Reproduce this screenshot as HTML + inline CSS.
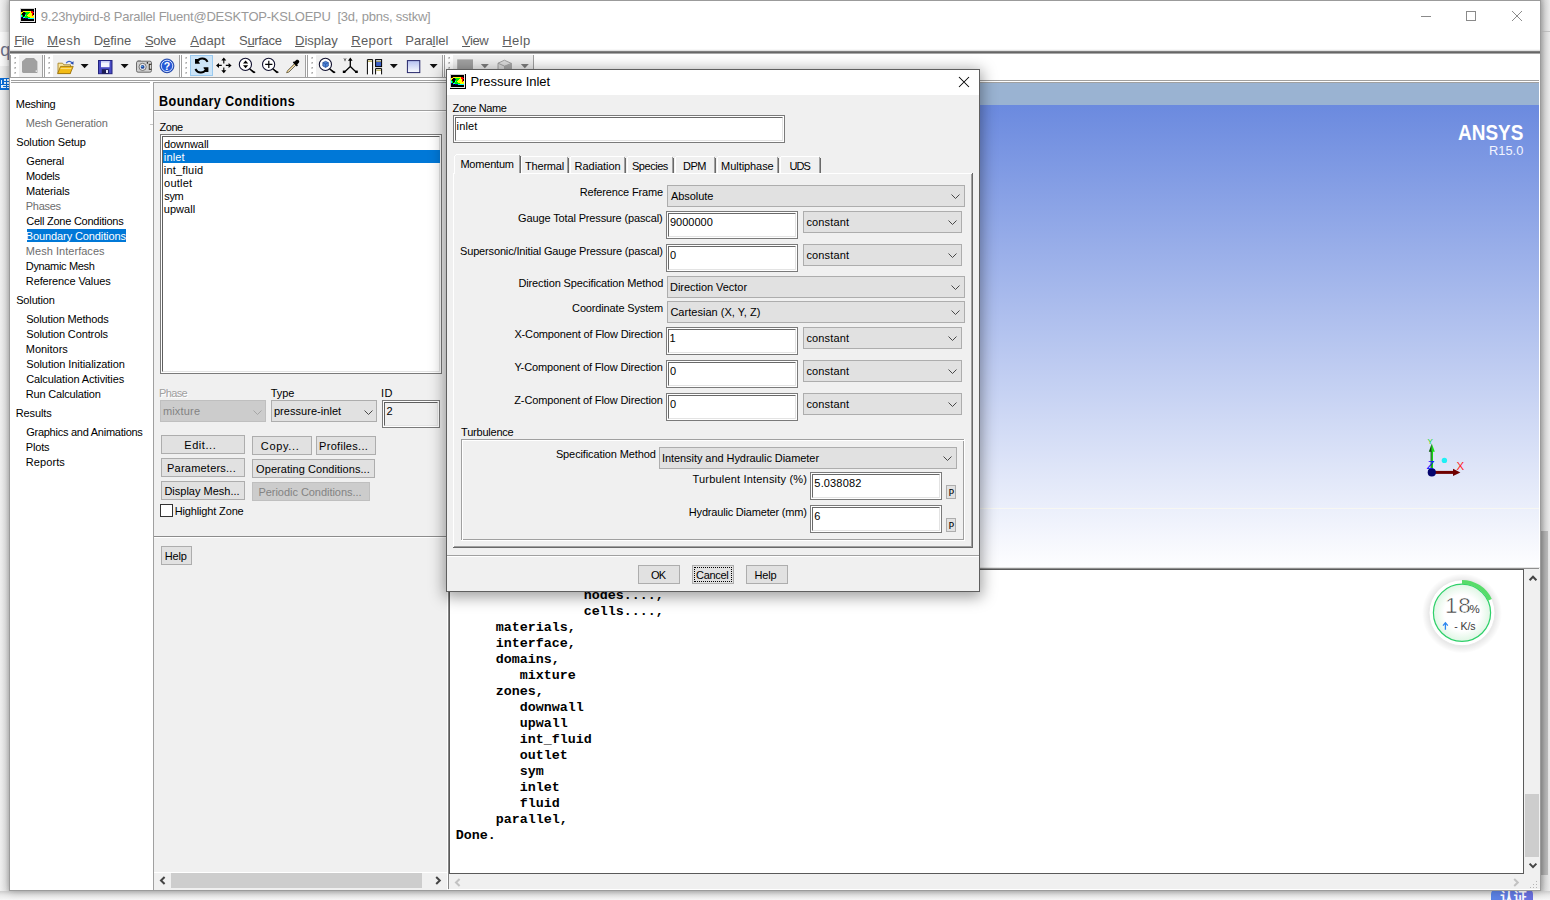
<!DOCTYPE html>
<html lang="en"><head><meta charset="utf-8"><title>Fluent - Pressure Inlet</title>
<style>
html,body{margin:0;padding:0;}
body{width:1550px;height:900px;overflow:hidden;position:relative;background:#f0f0f0;font-family:"Liberation Sans",sans-serif;font-size:11px;}
div,span.t,svg{position:absolute;box-sizing:border-box;}
span.t{white-space:pre;}
svg{overflow:visible;}
u{text-decoration:underline;text-underline-offset:1px;}
</style></head>
<body>
<div style="left:0px;top:0px;width:9px;height:900px;background:linear-gradient(90deg,#f0f0f0 0,#e6e6e6 60%,#d2d2d2 100%);"></div>
<div style="left:0px;top:32px;width:9px;height:34px;background:linear-gradient(90deg,#fbfbfb 0,#f4f4f4 70%,#dedede 100%);"></div>
<span id="t1" class="t" style="top:41.16px;font-size:18px;line-height:18px;color:#6b6e86;left:0.20px;">q</span>
<div style="left:0px;top:78px;width:9px;height:12px;background:#0a6cd6;"></div>
<svg style="left:0px;top:78px;shape-rendering:crispEdges;" width="9" height="12" viewBox="0 0 9 12"><g fill="#e8f4ff"><rect x="1" y="2" width="1" height="4"/><rect x="4" y="1" width="2" height="2"/><rect x="7" y="1" width="2" height="2"/><rect x="4" y="4" width="2" height="2"/><rect x="7" y="4" width="2" height="2"/><rect x="1" y="7" width="2" height="3"/><rect x="3" y="7" width="3" height="1"/><rect x="7" y="7" width="2" height="1"/><rect x="3" y="9" width="3" height="1"/><rect x="7" y="9" width="2" height="1"/></g></svg>
<div style="left:1541px;top:0px;width:9px;height:900px;background:linear-gradient(90deg,#c2c2c2 0,#dcdcdc 45%,#ececec 100%);"></div>
<div style="left:1541px;top:31px;width:9px;height:1px;background:#c4c4c4;"></div>
<div style="left:1541px;top:531px;width:7px;height:344px;background:linear-gradient(90deg,#9c9c9c 0,#b4b4b4 60%,#bcbcbc 100%);"></div>
<div style="left:0px;top:891px;width:1550px;height:9px;background:linear-gradient(180deg,#cfcfcf 0,#e9e9e9 45%,#f7f7f7 100%);"></div>
<div style="left:1491px;top:889px;width:42px;height:16px;background:linear-gradient(90deg,#5a85e6,#6a6fe0);border-radius:5px 5px 0 0;"></div>
<span id="t2" class="t" style="top:891.07px;font-size:13.5px;line-height:13.5px;color:#fff;font-family:'Liberation Sans', 'Noto Sans CJK SC', sans-serif;font-weight:bold;left:1500.00px;">认证</span>
<div style="left:9px;top:0px;width:1532px;height:891px;background:#ffffff;border:1px solid #9b9b9b;box-shadow:0 0 9px rgba(0,0,0,.28);"></div>
<span id="t3" class="t" style="top:10.00px;font-size:13px;line-height:13px;color:#999999;letter-spacing:-0.224px;left:40.74px;">9.23hybird-8 Parallel Fluent@DESKTOP-KSLOEPU  [3d, pbns, sstkw]</span>
<svg style="left:20px;top:8px;shape-rendering:crispEdges;" width="16" height="15" viewBox="0 0 16 15"><rect x="0" y="0" width="15" height="1" fill="#d4d4d4"/><rect x="15" y="0" width="1" height="1" fill="#000000"/><rect x="0" y="1" width="1" height="1" fill="#d4d4d4"/><rect x="1" y="1" width="13" height="1" fill="#000000"/><rect x="14" y="1" width="1" height="1" fill="#e8e8e8"/><rect x="15" y="1" width="1" height="1" fill="#000000"/><rect x="0" y="2" width="1" height="1" fill="#d4d4d4"/><rect x="1" y="2" width="13" height="1" fill="#000000"/><rect x="14" y="2" width="1" height="1" fill="#e8e8e8"/><rect x="15" y="2" width="1" height="1" fill="#000000"/><rect x="0" y="3" width="1" height="1" fill="#d4d4d4"/><rect x="1" y="3" width="1" height="1" fill="#000000"/><rect x="2" y="3" width="1" height="1" fill="#700000"/><rect x="3" y="3" width="8" height="1" fill="#ffff00"/><rect x="11" y="3" width="2" height="1" fill="#ff0000"/><rect x="13" y="3" width="1" height="1" fill="#000000"/><rect x="14" y="3" width="1" height="1" fill="#e8e8e8"/><rect x="15" y="3" width="1" height="1" fill="#000000"/><rect x="0" y="4" width="1" height="1" fill="#d4d4d4"/><rect x="1" y="4" width="2" height="1" fill="#ffff00"/><rect x="3" y="4" width="2" height="1" fill="#000000"/><rect x="5" y="4" width="5" height="1" fill="#00ee00"/><rect x="10" y="4" width="1" height="1" fill="#ffff00"/><rect x="11" y="4" width="3" height="1" fill="#ff0000"/><rect x="14" y="4" width="1" height="1" fill="#e8e8e8"/><rect x="15" y="4" width="1" height="1" fill="#000000"/><rect x="0" y="5" width="1" height="1" fill="#d4d4d4"/><rect x="1" y="5" width="1" height="1" fill="#ffff00"/><rect x="2" y="5" width="3" height="1" fill="#000000"/><rect x="5" y="5" width="1" height="1" fill="#000090"/><rect x="6" y="5" width="3" height="1" fill="#00ee00"/><rect x="9" y="5" width="3" height="1" fill="#ffff00"/><rect x="12" y="5" width="1" height="1" fill="#ff0000"/><rect x="13" y="5" width="1" height="1" fill="#000000"/><rect x="14" y="5" width="1" height="1" fill="#e8e8e8"/><rect x="15" y="5" width="1" height="1" fill="#000000"/><rect x="0" y="6" width="1" height="1" fill="#d4d4d4"/><rect x="1" y="6" width="1" height="1" fill="#00ee00"/><rect x="2" y="6" width="3" height="1" fill="#000000"/><rect x="5" y="6" width="3" height="1" fill="#00ee00"/><rect x="8" y="6" width="4" height="1" fill="#ffff00"/><rect x="12" y="6" width="1" height="1" fill="#ff0000"/><rect x="13" y="6" width="1" height="1" fill="#000000"/><rect x="14" y="6" width="1" height="1" fill="#e8e8e8"/><rect x="15" y="6" width="1" height="1" fill="#000000"/><rect x="0" y="7" width="1" height="1" fill="#d4d4d4"/><rect x="1" y="7" width="1" height="1" fill="#00ffff"/><rect x="2" y="7" width="1" height="1" fill="#00ee00"/><rect x="3" y="7" width="2" height="1" fill="#000000"/><rect x="5" y="7" width="1" height="1" fill="#00ffff"/><rect x="6" y="7" width="1" height="1" fill="#00ee00"/><rect x="7" y="7" width="5" height="1" fill="#ffff00"/><rect x="12" y="7" width="1" height="1" fill="#ff0000"/><rect x="13" y="7" width="1" height="1" fill="#ffff00"/><rect x="14" y="7" width="1" height="1" fill="#e8e8e8"/><rect x="15" y="7" width="1" height="1" fill="#000000"/><rect x="0" y="8" width="1" height="1" fill="#d4d4d4"/><rect x="1" y="8" width="1" height="1" fill="#00ffff"/><rect x="2" y="8" width="1" height="1" fill="#00ee00"/><rect x="3" y="8" width="1" height="1" fill="#000000"/><rect x="4" y="8" width="4" height="1" fill="#00ee00"/><rect x="8" y="8" width="6" height="1" fill="#ffff00"/><rect x="14" y="8" width="1" height="1" fill="#e8e8e8"/><rect x="15" y="8" width="1" height="1" fill="#000000"/><rect x="0" y="9" width="1" height="1" fill="#d4d4d4"/><rect x="1" y="9" width="1" height="1" fill="#000090"/><rect x="2" y="9" width="1" height="1" fill="#000000"/><rect x="3" y="9" width="2" height="1" fill="#00ffff"/><rect x="5" y="9" width="5" height="1" fill="#00ee00"/><rect x="10" y="9" width="4" height="1" fill="#ffff00"/><rect x="14" y="9" width="1" height="1" fill="#e8e8e8"/><rect x="15" y="9" width="1" height="1" fill="#000000"/><rect x="0" y="10" width="1" height="1" fill="#d4d4d4"/><rect x="1" y="10" width="2" height="1" fill="#000000"/><rect x="3" y="10" width="1" height="1" fill="#000090"/><rect x="4" y="10" width="1" height="1" fill="#000000"/><rect x="5" y="10" width="3" height="1" fill="#000090"/><rect x="8" y="10" width="6" height="1" fill="#00ffff"/><rect x="14" y="10" width="1" height="1" fill="#e8e8e8"/><rect x="15" y="10" width="1" height="1" fill="#000000"/><rect x="0" y="11" width="1" height="1" fill="#d4d4d4"/><rect x="1" y="11" width="13" height="1" fill="#000000"/><rect x="14" y="11" width="1" height="1" fill="#e8e8e8"/><rect x="15" y="11" width="1" height="1" fill="#000000"/><rect x="0" y="12" width="1" height="1" fill="#d4d4d4"/><rect x="1" y="12" width="13" height="1" fill="#000000"/><rect x="14" y="12" width="1" height="1" fill="#e8e8e8"/><rect x="15" y="12" width="1" height="1" fill="#000000"/><rect x="0" y="13" width="1" height="1" fill="#d4d4d4"/><rect x="1" y="13" width="14" height="1" fill="#e8e8e8"/><rect x="15" y="13" width="1" height="1" fill="#000000"/><rect x="0" y="14" width="16" height="1" fill="#000000"/></svg>
<svg style="left:1415px;top:5px;" width="120" height="24" viewBox="0 0 120 24"><g stroke="#8a8a8a" stroke-width="1" fill="none" shape-rendering="crispEdges"><path d="M6 11.5h10"/><rect x="51.5" y="6.5" width="9" height="9"/></g><g stroke="#858585" stroke-width=".95" fill="none"><path d="M97 6l10 10M107 6l-10 10"/></g></svg>
<span id="t4" class="t" style="top:34.00px;font-size:13px;line-height:13px;color:#5c5c5c;letter-spacing:-0.314px;left:14.14px;"><u>F</u>ile</span>
<span id="t5" class="t" style="top:34.00px;font-size:13px;line-height:13px;color:#5c5c5c;letter-spacing:0.522px;left:47.24px;"><u>M</u>esh</span>
<span id="t6" class="t" style="top:34.00px;font-size:13px;line-height:13px;color:#5c5c5c;letter-spacing:-0.035px;left:93.74px;">D<u>e</u>fine</span>
<span id="t7" class="t" style="top:34.00px;font-size:13px;line-height:13px;color:#5c5c5c;letter-spacing:-0.329px;left:144.94px;"><u>S</u>olve</span>
<span id="t8" class="t" style="top:34.00px;font-size:13px;line-height:13px;color:#5c5c5c;letter-spacing:0.119px;left:190.30px;"><u>A</u>dapt</span>
<span id="t9" class="t" style="top:34.00px;font-size:13px;line-height:13px;color:#5c5c5c;letter-spacing:-0.316px;left:239.04px;">S<u>u</u>rface</span>
<span id="t10" class="t" style="top:34.00px;font-size:13px;line-height:13px;color:#5c5c5c;letter-spacing:0.006px;left:295.04px;"><u>D</u>isplay</span>
<span id="t11" class="t" style="top:34.00px;font-size:13px;line-height:13px;color:#5c5c5c;letter-spacing:0.399px;left:351.14px;"><u>R</u>eport</span>
<span id="t12" class="t" style="top:34.00px;font-size:13px;line-height:13px;color:#5c5c5c;letter-spacing:-0.052px;left:405.34px;">Para<u>l</u>lel</span>
<span id="t13" class="t" style="top:34.00px;font-size:13px;line-height:13px;color:#5c5c5c;letter-spacing:-0.431px;left:462.00px;"><u>V</u>iew</span>
<span id="t14" class="t" style="top:34.00px;font-size:13px;line-height:13px;color:#5c5c5c;letter-spacing:0.390px;left:502.34px;"><u>H</u>elp</span>
<div style="left:10px;top:49px;width:1530px;height:1px;background:#f8f8f8;"></div>
<div style="left:10px;top:50px;width:1530px;height:1px;background:#e2e2e2;"></div>
<div style="left:10px;top:51px;width:1530px;height:1px;background:#7e7e7e;"></div>
<div style="left:10px;top:52px;width:1530px;height:1px;background:#666666;"></div>
<div style="left:10px;top:53px;width:1530px;height:1px;background:#a8a8a8;"></div>
<div style="left:19px;top:55px;width:23px;height:22px;background:#f0f0f0;"></div>
<div style="left:53px;top:55px;width:126px;height:22px;background:#f0f0f0;"></div>
<div style="left:190px;top:55px;width:115px;height:22px;background:#f0f0f0;"></div>
<div style="left:316px;top:55px;width:126px;height:22px;background:#f0f0f0;"></div>
<div style="left:453px;top:55px;width:80px;height:22px;background:#f0f0f0;"></div>
<div style="left:42px;top:55px;width:1px;height:23px;background:#a0a0a0;"></div>
<div style="left:44px;top:55px;width:1px;height:23px;background:#a0a0a0;"></div>
<div style="left:179px;top:55px;width:1px;height:23px;background:#a0a0a0;"></div>
<div style="left:181px;top:55px;width:1px;height:23px;background:#a0a0a0;"></div>
<div style="left:305px;top:55px;width:1px;height:23px;background:#a0a0a0;"></div>
<div style="left:307px;top:55px;width:1px;height:23px;background:#a0a0a0;"></div>
<div style="left:442px;top:55px;width:1px;height:23px;background:#a0a0a0;"></div>
<div style="left:444px;top:55px;width:1px;height:23px;background:#a0a0a0;"></div>
<div style="left:533px;top:55px;width:1px;height:23px;background:#a0a0a0;"></div>
<div style="left:10px;top:55px;width:1px;height:23px;background:#a0a0a0;"></div>
<div style="left:11px;top:77px;width:523px;height:1px;background:#a0a0a0;"></div>
<div style="left:11px;top:80px;width:1528px;height:1px;background:#a0a0a0;"></div>
<div style="left:11px;top:82px;width:139px;height:1px;background:#a0a0a0;"></div>
<div style="left:153px;top:82px;width:1386px;height:1px;background:#a0a0a0;"></div>
<svg style="left:0;top:0;shape-rendering:crispEdges;" width="1550" height="900" viewBox="0 0 1550 900"><rect x="14" y="57" width="2" height="2" fill="#d2d2d2"/><rect x="15" y="57" width="1" height="1" fill="#a8a8a8"/><rect x="14" y="62" width="2" height="2" fill="#d2d2d2"/><rect x="15" y="62" width="1" height="1" fill="#a8a8a8"/><rect x="14" y="67" width="2" height="2" fill="#d2d2d2"/><rect x="15" y="67" width="1" height="1" fill="#a8a8a8"/><rect x="14" y="72" width="2" height="2" fill="#d2d2d2"/><rect x="15" y="72" width="1" height="1" fill="#a8a8a8"/><rect x="48" y="57" width="2" height="2" fill="#d2d2d2"/><rect x="49" y="57" width="1" height="1" fill="#a8a8a8"/><rect x="48" y="62" width="2" height="2" fill="#d2d2d2"/><rect x="49" y="62" width="1" height="1" fill="#a8a8a8"/><rect x="48" y="67" width="2" height="2" fill="#d2d2d2"/><rect x="49" y="67" width="1" height="1" fill="#a8a8a8"/><rect x="48" y="72" width="2" height="2" fill="#d2d2d2"/><rect x="49" y="72" width="1" height="1" fill="#a8a8a8"/><rect x="185" y="57" width="2" height="2" fill="#d2d2d2"/><rect x="186" y="57" width="1" height="1" fill="#a8a8a8"/><rect x="185" y="62" width="2" height="2" fill="#d2d2d2"/><rect x="186" y="62" width="1" height="1" fill="#a8a8a8"/><rect x="185" y="67" width="2" height="2" fill="#d2d2d2"/><rect x="186" y="67" width="1" height="1" fill="#a8a8a8"/><rect x="185" y="72" width="2" height="2" fill="#d2d2d2"/><rect x="186" y="72" width="1" height="1" fill="#a8a8a8"/><rect x="311" y="57" width="2" height="2" fill="#d2d2d2"/><rect x="312" y="57" width="1" height="1" fill="#a8a8a8"/><rect x="311" y="62" width="2" height="2" fill="#d2d2d2"/><rect x="312" y="62" width="1" height="1" fill="#a8a8a8"/><rect x="311" y="67" width="2" height="2" fill="#d2d2d2"/><rect x="312" y="67" width="1" height="1" fill="#a8a8a8"/><rect x="311" y="72" width="2" height="2" fill="#d2d2d2"/><rect x="312" y="72" width="1" height="1" fill="#a8a8a8"/><rect x="448" y="57" width="2" height="2" fill="#d2d2d2"/><rect x="449" y="57" width="1" height="1" fill="#a8a8a8"/><rect x="448" y="62" width="2" height="2" fill="#d2d2d2"/><rect x="449" y="62" width="1" height="1" fill="#a8a8a8"/><rect x="448" y="67" width="2" height="2" fill="#d2d2d2"/><rect x="449" y="67" width="1" height="1" fill="#a8a8a8"/><rect x="448" y="72" width="2" height="2" fill="#d2d2d2"/><rect x="449" y="72" width="1" height="1" fill="#a8a8a8"/></svg>
<svg style="left:0;top:0;" width="1550" height="900" viewBox="0 0 1550 900"><path d="M26 58h8l3.4 3.4v11.6h-14.4l-1-1v-10.6z" fill="#a0a0a0"/><rect x="35.6" y="70.4" width="1.4" height="1.4" fill="#f0f0f0"/><path d="M58 63.2h4.6l1.2 1.6h6.7v8.7h-12.5z" fill="#f9e7a0" stroke="#a98524" stroke-width=".9"/><path d="M57.6 73.6l3-7.2h12.6l-3 7.2z" fill="#f2bb16" stroke="#9c7412" stroke-width=".9"/><path d="M60.5 68.6h10.8" stroke="#fbe08a" stroke-width="1"/><path d="M66.2 63.2c1-2 4.2-2.6 5.8-.3" fill="none" stroke="#3c64c8" stroke-width="1.2"/><path d="M73.6 61.2l-.2 3.6-3-1.6z" fill="#2a4db0"/><path d="M80.6 64h8l-4 4.3z" fill="#111"/><path d="M120.6 64h8l-4 4.3z" fill="#111"/><rect x="98.5" y="60.5" width="13.5" height="13.2" fill="#4a4cc4" stroke="#23237e" stroke-width="1"/><rect x="101" y="61" width="8.5" height="6.2" fill="#f4f4ff"/><rect x="101" y="61" width="8.5" height="1.6" fill="#c9cdf5"/><rect x="101.8" y="69.2" width="7" height="4.5" fill="#1d1d55"/><rect x="106" y="70" width="2" height="3" fill="#e6e6f6"/><rect x="136.5" y="61.2" width="15" height="11" rx="1.6" fill="#cfcfcf" stroke="#5e5e5e" stroke-width=".9"/><rect x="137.6" y="60.2" width="3.2" height="1.4" fill="#8a8a8a"/><circle cx="142.6" cy="66.9" r="3.6" fill="#ececec" stroke="#6a6a6a" stroke-width=".9"/><circle cx="142.6" cy="66.9" r="1.9" fill="#27489c"/><circle cx="142.1" cy="66.4" r=".7" fill="#5fd0ff"/><circle cx="147.4" cy="62.9" r=".8" fill="#222"/><rect x="148.8" y="63.8" width="2.4" height="6" fill="#2a2418"/><rect x="149.7" y="64.8" width="1.5" height="4" fill="#d8d8d8"/><circle cx="167" cy="65.9" r="6.9" fill="#2457d6" stroke="#1b3fa0" stroke-width=".9"/><circle cx="167" cy="65.9" r="5.7" fill="none" stroke="#dfe9ff" stroke-width=".9"/><text x="167" y="70" font-family="Liberation Sans,sans-serif" font-size="10.5" font-weight="bold" fill="#fff" text-anchor="middle">?</text><rect x="190.5" y="55.5" width="22" height="20" fill="#cce4f7" stroke="#99c9ef" stroke-width="1"/><path d="M207.6 61.9C205.4 57.4 199.4 57.6 197.6 61" fill="none" stroke="#000" stroke-width="1.9"/><path d="M195 59h4.6v1.4l-1.2 1.2 1.4 1.4v.8h-4.8z" fill="#000"/><path d="M195.4 69C197.6 73.6 203.6 73.4 205.6 70" fill="none" stroke="#000" stroke-width="1.9"/><path d="M208.4 72h-4.4v-.9l1.2-1.2-1.6-1.6v-1.1h4.8z" fill="#000"/><path d="M217.6 65.4h4.2M225.8 65.4h4.2M223.8 59.2v4.2M223.8 67.4v4.2" stroke="#000" stroke-width="1.1" fill="none"/><path d="M216 65.4l3-2.5v5zM231.6 65.4l-3-2.5v5zM223.8 57.6l-2.5 3h5zM223.8 73.2l-2.5-3h5z" fill="#000"/><circle cx="245.4" cy="64.4" r="6.1" fill="#fff" stroke="#10102e" stroke-width="1.1"/><path d="M249.4 68.7l5.2 4.6 1-1.2z" fill="#000"/><path d="M249.6 68.80000000000001l4.4 3.8" stroke="#000" stroke-width="1.5"/><path d="M245.6 60.4l2.6 3h-5.2zM245.6 68.2l2.6-3h-5.2z" fill="#000"/><circle cx="268.6" cy="64.4" r="6.1" fill="#fff" stroke="#10102e" stroke-width="1.1"/><path d="M272.6 68.7l5.2 4.6 1-1.2z" fill="#000"/><path d="M272.8 68.80000000000001l4.4 3.8" stroke="#000" stroke-width="1.5"/><path d="M265.2 64.3h7.2M268.8 60.7v7.2" stroke="#000" stroke-width="1.2"/><path d="M286.6 72.8l1-2.2 7.8-7.8 1.4 1.4-7.8 7.8z" fill="#f3f1e4" stroke="#3a3320" stroke-width=".7"/><path d="M287 72.4l8.2-8.4" stroke="#d2a23a" stroke-width=".8" fill="none"/><path d="M294.4 61.8l1.6-1.6c1.6-1.6 4.4.8 2.8 2.6l-1.6 1.6 .8.8-1.2 1.2-4-4 1.2-1.2z" fill="#000"/><circle cx="325.4" cy="64.4" r="6.1" fill="#fff" stroke="#10102e" stroke-width="1.1"/><path d="M329.4 68.7l5.2 4.6 1-1.2z" fill="#000"/><path d="M329.59999999999997 68.80000000000001l4.4 3.8" stroke="#000" stroke-width="1.5"/><path d="M322.8 62.6l2.8-1.3 2.8 1.3v3.4l-2.8 1.4-2.8-1.4z" fill="#4f86d8" stroke="#1b3f88" stroke-width=".6"/><path d="M322.8 62.6l2.8 1.3 2.8-1.3M325.6 63.9v3.5" stroke="#1b3f88" stroke-width=".5" fill="none"/><path d="M350.3 66.6v-7M350.3 66.6l-6 5.6M350.3 66.6l6 5.6" stroke="#000" stroke-width="1.3" fill="none"/><path d="M350.3 57.6l-2.3 3.2h4.6z" fill="#000"/><rect x="342.8" y="70.6" width="2.6" height="2.4" fill="#000"/><rect x="355.2" y="70.6" width="2.6" height="2.4" fill="#000"/><path d="M344 58.4l1 1.4 1-1.4M345 59.8v1.4" stroke="#000" stroke-width=".7" fill="none"/><path d="M367.4 74.4v-14.8h5.2v14.8" fill="#fff" stroke="#000" stroke-width="1"/><rect x="368" y="60.6" width="4" height="1.2" fill="#b8ac50"/><rect x="375.6" y="59.6" width="6" height="7" fill="#3b5fc6" stroke="#000" stroke-width="1"/><rect x="376.2" y="60.6" width="4.8" height="1.2" fill="#b8ac50"/><rect x="376.2" y="60.1" width="4.8" height=".6" fill="#fff"/><path d="M375.6 74.4v-5.8h6v5.8" fill="#fff" stroke="#000" stroke-width="1"/><rect x="376.2" y="69.6" width="4.8" height="1.2" fill="#b8ac50"/><path d="M389.8 64h8l-4 4.3z" fill="#111"/><path d="M429.6 64h8l-4 4.3z" fill="#111"/><defs><linearGradient id="gsq" x1="0" y1="0" x2="0" y2="1"><stop offset="0" stop-color="#b4c0f0"/><stop offset="1" stop-color="#fbfcff"/></linearGradient></defs><rect x="407.4" y="60.6" width="12.4" height="12" fill="url(#gsq)" stroke="#26266a" stroke-width="1"/><rect x="457.2" y="59.4" width="15.8" height="15" fill="#a2a2a2"/><path d="M480.8 64h8l-4 4.3z" fill="#7d7d7d"/><path d="M520.8 64h8l-4 4.3z" fill="#7d7d7d"/><path d="M498 63.2l6.4-3 7 3.2v9l-7 3-6.4-3z" fill="#dcdcdc" stroke="#9a9a9a" stroke-width=".9"/><path d="M498 63.2l6.6 3 6.8-2.8M504.6 66.2v9" fill="none" stroke="#9a9a9a" stroke-width=".9"/><path d="M504.6 66.2l6.8-2.8v9l-6.8 3z" fill="#a9a9a9"/></svg>
<span id="t15" class="t" style="top:98.69px;font-size:11px;line-height:11px;color:#000;letter-spacing:-0.287px;left:15.82px;">Meshing</span>
<span id="t16" class="t" style="top:117.69px;font-size:11px;line-height:11px;color:#6d6d6d;letter-spacing:-0.173px;left:25.82px;">Mesh Generation</span>
<span id="t17" class="t" style="top:136.69px;font-size:11px;line-height:11px;color:#000;letter-spacing:-0.140px;left:16.20px;">Solution Setup</span>
<span id="t18" class="t" style="top:155.69px;font-size:11px;line-height:11px;color:#000;letter-spacing:-0.223px;left:26.30px;">General</span>
<span id="t19" class="t" style="top:170.69px;font-size:11px;line-height:11px;color:#000;letter-spacing:-0.282px;left:25.93px;">Models</span>
<span id="t20" class="t" style="top:185.69px;font-size:11px;line-height:11px;color:#000;letter-spacing:-0.097px;left:25.93px;">Materials</span>
<span id="t21" class="t" style="top:200.69px;font-size:11px;line-height:11px;color:#6d6d6d;letter-spacing:-0.308px;left:25.82px;">Phases</span>
<span id="t22" class="t" style="top:215.69px;font-size:11px;line-height:11px;color:#000;letter-spacing:-0.244px;left:26.20px;">Cell Zone Conditions</span>
<div style="left:27px;top:229px;width:99px;height:13px;background:#0078d7;"></div>
<span id="t23" class="t" style="top:230.69px;font-size:11px;line-height:11px;color:#ffffff;letter-spacing:-0.109px;left:25.82px;">Boundary Conditions</span>
<span id="t24" class="t" style="top:245.69px;font-size:11px;line-height:11px;color:#6d6d6d;letter-spacing:0.035px;left:25.82px;">Mesh Interfaces</span>
<span id="t25" class="t" style="top:260.69px;font-size:11px;line-height:11px;color:#000;letter-spacing:-0.344px;left:25.82px;">Dynamic Mesh</span>
<span id="t26" class="t" style="top:275.69px;font-size:11px;line-height:11px;color:#000;letter-spacing:-0.118px;left:25.82px;">Reference Values</span>
<span id="t27" class="t" style="top:294.69px;font-size:11px;line-height:11px;color:#000;letter-spacing:-0.153px;left:16.20px;">Solution</span>
<span id="t28" class="t" style="top:313.69px;font-size:11px;line-height:11px;color:#000;letter-spacing:-0.168px;left:26.20px;">Solution Methods</span>
<span id="t29" class="t" style="top:328.69px;font-size:11px;line-height:11px;color:#000;letter-spacing:-0.125px;left:26.20px;">Solution Controls</span>
<span id="t30" class="t" style="top:343.69px;font-size:11px;line-height:11px;color:#000;letter-spacing:-0.033px;left:25.82px;">Monitors</span>
<span id="t31" class="t" style="top:358.69px;font-size:11px;line-height:11px;color:#000;letter-spacing:-0.073px;left:26.20px;">Solution Initialization</span>
<span id="t32" class="t" style="top:373.69px;font-size:11px;line-height:11px;color:#000;letter-spacing:-0.110px;left:26.20px;">Calculation Activities</span>
<span id="t33" class="t" style="top:388.69px;font-size:11px;line-height:11px;color:#000;letter-spacing:-0.186px;left:25.82px;">Run Calculation</span>
<span id="t34" class="t" style="top:407.69px;font-size:11px;line-height:11px;color:#000;letter-spacing:-0.138px;left:15.82px;">Results</span>
<span id="t35" class="t" style="top:426.69px;font-size:11px;line-height:11px;color:#000;letter-spacing:-0.255px;left:26.20px;">Graphics and Animations</span>
<span id="t36" class="t" style="top:441.69px;font-size:11px;line-height:11px;color:#000;letter-spacing:-0.176px;left:25.82px;">Plots</span>
<span id="t37" class="t" style="top:456.69px;font-size:11px;line-height:11px;color:#000;letter-spacing:0.072px;left:25.82px;">Reports</span>
<div style="left:150px;top:124px;width:3px;height:1px;background:#c8c8c8;"></div>
<div style="left:153px;top:83px;width:294px;height:807px;background:#f0f0f0;"></div>
<div style="left:153px;top:82px;width:1px;height:808px;background:#a0a0a0;"></div>
<span id="t38" class="t" style="top:94.25px;font-size:14px;line-height:14px;color:#000;font-weight:bold;letter-spacing:0.468px;left:159.03px;transform-origin:0 0;transform:scaleX(.9);">Boundary Conditions</span>
<div style="left:154px;top:110px;width:293px;height:1px;background:#a0a0a0;"></div>
<div style="left:154px;top:111px;width:293px;height:1px;background:#ffffff;"></div>
<span id="t39" class="t" style="top:121.69px;font-size:11px;line-height:11px;color:#000;letter-spacing:-0.443px;left:159.49px;">Zone</span>
<div style="left:160px;top:134px;width:282px;height:240px;background:#fff;border:1px solid #7a7a7a;"></div>
<div style="left:162px;top:136px;width:278px;height:236px;background:#fff;border:1px solid;border-color:#5f5f5f #e3e3e3 #e3e3e3 #5f5f5f;"></div>
<div style="left:163px;top:150px;width:277px;height:13px;background:#0078d7;"></div>
<span id="t40" class="t" style="top:138.69px;font-size:11px;line-height:11px;color:#000;letter-spacing:-0.088px;left:164.06px;">downwall</span>
<span id="t41" class="t" style="top:151.69px;font-size:11px;line-height:11px;color:#fff;letter-spacing:0.141px;left:163.81px;">inlet</span>
<span id="t42" class="t" style="top:164.69px;font-size:11px;line-height:11px;color:#000;letter-spacing:0.182px;left:163.81px;">int_fluid</span>
<span id="t43" class="t" style="top:177.69px;font-size:11px;line-height:11px;color:#000;letter-spacing:0.217px;left:164.06px;">outlet</span>
<span id="t44" class="t" style="top:190.69px;font-size:11px;line-height:11px;color:#000;letter-spacing:-0.375px;left:164.25px;">sym</span>
<span id="t45" class="t" style="top:203.69px;font-size:11px;line-height:11px;color:#000;letter-spacing:0.039px;left:163.81px;">upwall</span>
<span id="t46" class="t" style="top:388.69px;font-size:11px;line-height:11px;color:#ffffff;letter-spacing:-0.596px;left:159.93px;">Phase</span>
<span id="t47" class="t" style="top:387.69px;font-size:11px;line-height:11px;color:#a0a0a0;letter-spacing:-0.596px;left:158.93px;">Phase</span>
<span id="t48" class="t" style="top:387.69px;font-size:11px;line-height:11px;color:#000;letter-spacing:-0.077px;left:270.81px;">Type</span>
<span id="t49" class="t" style="top:388.29px;font-size:11px;line-height:11px;color:#000;letter-spacing:0.506px;left:381.00px;">ID</span>
<div style="left:160px;top:400px;width:106px;height:22px;background:#cccccc;border:1px solid #bfbfbf;"></div>
<span id="t50" class="t" style="top:405.69px;font-size:11px;line-height:11px;color:#838383;letter-spacing:0.176px;left:162.91px;">mixture</span>
<svg style="left:252.5px;top:409.5px;" width="9" height="5" viewBox="0 0 9 5"><path d="M.5 .5l4 4 4-4" fill="none" stroke="#a6a6a6" stroke-width="1"/></svg>
<div style="left:271px;top:400px;width:106px;height:22px;background:#e1e1e1;border:1px solid #adadad;"></div>
<span id="t51" class="t" style="top:405.69px;font-size:11px;line-height:11px;color:#000;letter-spacing:0.046px;left:273.91px;">pressure-inlet</span>
<svg style="left:363.5px;top:409.5px;" width="9" height="5" viewBox="0 0 9 5"><path d="M.5 .5l4 4 4-4" fill="none" stroke="#484848" stroke-width="1"/></svg>
<div style="left:382px;top:400px;width:58px;height:28px;background:#fff;border:1px solid #7a7a7a;"></div>
<div style="left:384px;top:402px;width:54px;height:24px;background:#f0f0f0;border:1px solid;border-color:#5f5f5f #e3e3e3 #e3e3e3 #5f5f5f;"></div>
<span id="t52" class="t" style="top:405.69px;font-size:11px;line-height:11px;color:#000;left:386.50px;">2</span>
<div style="left:161px;top:435px;width:84px;height:19px;background:#e1e1e1;border:1px solid #adadad;"></div>
<span id="t53" class="t" style="top:439.69px;font-size:11px;line-height:11px;color:#000;letter-spacing:0.541px;left:184.32px;">Edit...</span>
<div style="left:252px;top:436px;width:60px;height:19px;background:#e1e1e1;border:1px solid #adadad;"></div>
<span id="t54" class="t" style="top:440.69px;font-size:11px;line-height:11px;color:#000;letter-spacing:0.660px;left:260.80px;">Copy...</span>
<div style="left:316px;top:436px;width:60px;height:19px;background:#e1e1e1;border:1px solid #adadad;"></div>
<span id="t55" class="t" style="top:440.69px;font-size:11px;line-height:11px;color:#000;letter-spacing:0.282px;left:319.12px;">Profiles...</span>
<div style="left:161px;top:458px;width:84px;height:19px;background:#e1e1e1;border:1px solid #adadad;"></div>
<span id="t56" class="t" style="top:462.69px;font-size:11px;line-height:11px;color:#000;letter-spacing:0.221px;left:167.03px;">Parameters...</span>
<div style="left:252px;top:459px;width:123px;height:19px;background:#e1e1e1;border:1px solid #adadad;"></div>
<span id="t57" class="t" style="top:463.69px;font-size:11px;line-height:11px;color:#000;letter-spacing:0.054px;left:256.10px;">Operating Conditions...</span>
<div style="left:161px;top:481px;width:84px;height:19px;background:#e1e1e1;border:1px solid #adadad;"></div>
<span id="t58" class="t" style="top:485.69px;font-size:11px;line-height:11px;color:#000;left:164.43px;">Display Mesh...</span>
<div style="left:252px;top:482px;width:118px;height:19px;background:#cccccc;border:1px solid #bfbfbf;"></div>
<span id="t59" class="t" style="top:486.69px;font-size:11px;line-height:11px;color:#838383;letter-spacing:-0.037px;left:258.43px;">Periodic Conditions...</span>
<div style="left:160px;top:504px;width:13px;height:13px;background:#fff;border:1px solid #333333;"></div>
<span id="t60" class="t" style="top:505.69px;font-size:11px;line-height:11px;color:#000;letter-spacing:-0.148px;left:174.72px;">Highlight Zone</span>
<div style="left:154px;top:536px;width:293px;height:1px;background:#8c8c8c;"></div>
<div style="left:154px;top:537px;width:293px;height:1px;background:#ffffff;"></div>
<div style="left:161px;top:546px;width:31px;height:19px;background:#e1e1e1;border:1px solid #adadad;"></div>
<span id="t61" class="t" style="top:550.69px;font-size:11px;line-height:11px;color:#000;letter-spacing:-0.173px;left:164.72px;">Help</span>
<div style="left:154px;top:873px;width:293px;height:17px;background:#f0f0f0;"></div>
<div style="left:154px;top:872px;width:293px;height:1px;background:#ffffff;"></div>
<div style="left:171px;top:873px;width:251px;height:15px;background:#cdcdcd;"></div>
<svg style="left:158px;top:876px;" width="9" height="9" viewBox="0 0 9 9"><path d="M6.6 1l-3.6 3.5 3.6 3.5" fill="none" stroke="#444" stroke-width="2"/></svg>
<svg style="left:433px;top:876px;" width="9" height="9" viewBox="0 0 9 9"><path d="M3.2 1l3.6 3.5-3.6 3.5" fill="none" stroke="#444" stroke-width="2"/></svg>
<div style="left:447px;top:83px;width:1092px;height:22px;background:#9ab3d2;"></div>
<div style="left:447px;top:105px;width:1092px;height:463px;background:linear-gradient(180deg,#6b8adf 0%,#fefeff 100%);"></div>
<div style="left:1539px;top:83px;width:1px;height:485px;background:#ffffff;"></div>
<div style="left:447px;top:508px;width:1092px;height:1px;background:#f7f7f2;"></div>
<div style="left:447px;top:567px;width:1093px;height:1px;background:#e4e4e4;"></div>
<span id="t62" class="t" style="top:122.04px;font-size:22.4px;line-height:22.4px;color:#fff;font-weight:bold;left:1458.40px;transform-origin:0 0;transform:scaleX(.848);">ANSYS</span>
<span id="t63" class="t" style="top:143.93px;font-size:13.2px;line-height:13.2px;color:#f2f4ff;left:1489.00px;transform-origin:0 0;transform:scaleX(.975);">R15.0</span>
<svg style="left:0;top:0;" width="1550" height="900" viewBox="0 0 1550 900"><path d="M1432 472.4h22" stroke="#6e0000" stroke-width="3"/><path d="M1453 468.8l7.4 3.6-7.4 3.6z" fill="#6e0000"/><path d="M1431.2 472v-21" stroke="#0b5a0b" stroke-width="1.2"/><path d="M1432.4 472v-21" stroke="#12d812" stroke-width="1.2"/><path d="M1431.8 443.6l-3 8.2h3z" fill="#0b5a0b"/><path d="M1431.8 443.6l3 8.2h-3z" fill="#16e016"/><circle cx="1431.8" cy="472.4" r="4.1" fill="#04046e"/><circle cx="1444.4" cy="460.4" r="2.7" fill="#1ef0f5"/><text x="1427.6" y="443.8" font-family="Liberation Sans,sans-serif" font-size="8" fill="#12d812">Y</text><text x="1427" y="468.8" font-family="Liberation Sans,sans-serif" font-size="11" font-style="italic" fill="#1414ff">Z</text><text x="1456.6" y="470" font-family="Liberation Sans,sans-serif" font-size="11.5" fill="#ff1a1a">X</text></svg>
<div style="left:447px;top:568px;width:1093px;height:322px;background:#f0f0f0;"></div>
<div style="left:447px;top:568px;width:1092px;height:1px;background:#8f8f8f;"></div>
<div style="left:447px;top:569px;width:1px;height:321px;background:#ffffff;"></div>
<div style="left:448px;top:569px;width:1px;height:320px;background:#858585;"></div>
<div style="left:449px;top:889px;width:1091px;height:1px;background:#ffffff;"></div>
<div style="left:449px;top:569px;width:1075px;height:305px;background:#fff;border:1px solid #5a5a5a;"></div>
<span id="t64" class="t" style="top:589.41px;font-size:13.333px;line-height:13.333px;color:#000;font-family:'Liberation Mono', monospace;font-weight:bold;left:583.80px;">nodes....,</span>
<span id="t65" class="t" style="top:605.41px;font-size:13.333px;line-height:13.333px;color:#000;font-family:'Liberation Mono', monospace;font-weight:bold;left:583.80px;">cells....,</span>
<span id="t66" class="t" style="top:621.41px;font-size:13.333px;line-height:13.333px;color:#000;font-family:'Liberation Mono', monospace;font-weight:bold;left:495.80px;">materials,</span>
<span id="t67" class="t" style="top:637.41px;font-size:13.333px;line-height:13.333px;color:#000;font-family:'Liberation Mono', monospace;font-weight:bold;left:495.80px;">interface,</span>
<span id="t68" class="t" style="top:653.41px;font-size:13.333px;line-height:13.333px;color:#000;font-family:'Liberation Mono', monospace;font-weight:bold;left:495.80px;">domains,</span>
<span id="t69" class="t" style="top:669.41px;font-size:13.333px;line-height:13.333px;color:#000;font-family:'Liberation Mono', monospace;font-weight:bold;left:519.80px;">mixture</span>
<span id="t70" class="t" style="top:685.41px;font-size:13.333px;line-height:13.333px;color:#000;font-family:'Liberation Mono', monospace;font-weight:bold;left:495.80px;">zones,</span>
<span id="t71" class="t" style="top:701.41px;font-size:13.333px;line-height:13.333px;color:#000;font-family:'Liberation Mono', monospace;font-weight:bold;left:519.80px;">downwall</span>
<span id="t72" class="t" style="top:717.41px;font-size:13.333px;line-height:13.333px;color:#000;font-family:'Liberation Mono', monospace;font-weight:bold;left:519.80px;">upwall</span>
<span id="t73" class="t" style="top:733.41px;font-size:13.333px;line-height:13.333px;color:#000;font-family:'Liberation Mono', monospace;font-weight:bold;left:519.80px;">int_fluid</span>
<span id="t74" class="t" style="top:749.41px;font-size:13.333px;line-height:13.333px;color:#000;font-family:'Liberation Mono', monospace;font-weight:bold;left:519.80px;">outlet</span>
<span id="t75" class="t" style="top:765.41px;font-size:13.333px;line-height:13.333px;color:#000;font-family:'Liberation Mono', monospace;font-weight:bold;left:519.80px;">sym</span>
<span id="t76" class="t" style="top:781.41px;font-size:13.333px;line-height:13.333px;color:#000;font-family:'Liberation Mono', monospace;font-weight:bold;left:519.80px;">inlet</span>
<span id="t77" class="t" style="top:797.41px;font-size:13.333px;line-height:13.333px;color:#000;font-family:'Liberation Mono', monospace;font-weight:bold;left:519.80px;">fluid</span>
<span id="t78" class="t" style="top:813.41px;font-size:13.333px;line-height:13.333px;color:#000;font-family:'Liberation Mono', monospace;font-weight:bold;left:495.80px;">parallel,</span>
<span id="t79" class="t" style="top:829.41px;font-size:13.333px;line-height:13.333px;color:#000;font-family:'Liberation Mono', monospace;font-weight:bold;left:455.80px;">Done.</span>
<div style="left:1525px;top:794px;width:14px;height:63px;background:#cdcdcd;"></div>
<svg style="left:1528px;top:574px;" width="10" height="8" viewBox="0 0 10 8"><path d="M1.6 6.2l3.4-3.5 3.4 3.5" fill="none" stroke="#444" stroke-width="2"/></svg>
<svg style="left:1528px;top:862px;" width="10" height="8" viewBox="0 0 10 8"><path d="M1.6 1.6l3.4 3.5 3.4-3.5" fill="none" stroke="#444" stroke-width="2"/></svg>
<svg style="left:453px;top:878px;" width="9" height="9" viewBox="0 0 9 9"><path d="M6.6 1l-3.6 3.5 3.6 3.5" fill="none" stroke="#c2c2c2" stroke-width="2"/></svg>
<svg style="left:1511px;top:878px;" width="9" height="9" viewBox="0 0 9 9"><path d="M3.2 1l3.6 3.5-3.6 3.5" fill="none" stroke="#c2c2c2" stroke-width="2"/></svg>
<svg style="left:0;top:0;shape-rendering:crispEdges;" width="1550" height="900" viewBox="0 0 1550 900"><rect x="1536" y="881" width="1.4" height="1.4" fill="#b4b4b4"/><rect x="1533" y="884" width="1.4" height="1.4" fill="#b4b4b4"/><rect x="1536" y="884" width="1.4" height="1.4" fill="#b4b4b4"/><rect x="1530" y="887" width="1.4" height="1.4" fill="#b4b4b4"/><rect x="1533" y="887" width="1.4" height="1.4" fill="#b4b4b4"/><rect x="1536" y="887" width="1.4" height="1.4" fill="#b4b4b4"/></svg>
<div style="left:446px;top:69px;width:534px;height:523px;background:#f0f0f0;border:1px solid #5f5f5f;box-shadow:0 3px 14px 2px rgba(0,0,0,.38);"></div>
<div style="left:447px;top:70px;width:532px;height:25px;background:#ffffff;"></div>
<span id="t80" class="t" style="top:75.00px;font-size:13px;line-height:13px;color:#000;letter-spacing:-0.038px;left:470.44px;">Pressure Inlet</span>
<svg style="left:450px;top:74px;shape-rendering:crispEdges;" width="16" height="15" viewBox="0 0 16 15"><rect x="0" y="0" width="15" height="1" fill="#d4d4d4"/><rect x="15" y="0" width="1" height="1" fill="#000000"/><rect x="0" y="1" width="1" height="1" fill="#d4d4d4"/><rect x="1" y="1" width="13" height="1" fill="#000000"/><rect x="14" y="1" width="1" height="1" fill="#e8e8e8"/><rect x="15" y="1" width="1" height="1" fill="#000000"/><rect x="0" y="2" width="1" height="1" fill="#d4d4d4"/><rect x="1" y="2" width="13" height="1" fill="#000000"/><rect x="14" y="2" width="1" height="1" fill="#e8e8e8"/><rect x="15" y="2" width="1" height="1" fill="#000000"/><rect x="0" y="3" width="1" height="1" fill="#d4d4d4"/><rect x="1" y="3" width="1" height="1" fill="#000000"/><rect x="2" y="3" width="1" height="1" fill="#700000"/><rect x="3" y="3" width="8" height="1" fill="#ffff00"/><rect x="11" y="3" width="2" height="1" fill="#ff0000"/><rect x="13" y="3" width="1" height="1" fill="#000000"/><rect x="14" y="3" width="1" height="1" fill="#e8e8e8"/><rect x="15" y="3" width="1" height="1" fill="#000000"/><rect x="0" y="4" width="1" height="1" fill="#d4d4d4"/><rect x="1" y="4" width="2" height="1" fill="#ffff00"/><rect x="3" y="4" width="2" height="1" fill="#000000"/><rect x="5" y="4" width="5" height="1" fill="#00ee00"/><rect x="10" y="4" width="1" height="1" fill="#ffff00"/><rect x="11" y="4" width="3" height="1" fill="#ff0000"/><rect x="14" y="4" width="1" height="1" fill="#e8e8e8"/><rect x="15" y="4" width="1" height="1" fill="#000000"/><rect x="0" y="5" width="1" height="1" fill="#d4d4d4"/><rect x="1" y="5" width="1" height="1" fill="#ffff00"/><rect x="2" y="5" width="3" height="1" fill="#000000"/><rect x="5" y="5" width="1" height="1" fill="#000090"/><rect x="6" y="5" width="3" height="1" fill="#00ee00"/><rect x="9" y="5" width="3" height="1" fill="#ffff00"/><rect x="12" y="5" width="1" height="1" fill="#ff0000"/><rect x="13" y="5" width="1" height="1" fill="#000000"/><rect x="14" y="5" width="1" height="1" fill="#e8e8e8"/><rect x="15" y="5" width="1" height="1" fill="#000000"/><rect x="0" y="6" width="1" height="1" fill="#d4d4d4"/><rect x="1" y="6" width="1" height="1" fill="#00ee00"/><rect x="2" y="6" width="3" height="1" fill="#000000"/><rect x="5" y="6" width="3" height="1" fill="#00ee00"/><rect x="8" y="6" width="4" height="1" fill="#ffff00"/><rect x="12" y="6" width="1" height="1" fill="#ff0000"/><rect x="13" y="6" width="1" height="1" fill="#000000"/><rect x="14" y="6" width="1" height="1" fill="#e8e8e8"/><rect x="15" y="6" width="1" height="1" fill="#000000"/><rect x="0" y="7" width="1" height="1" fill="#d4d4d4"/><rect x="1" y="7" width="1" height="1" fill="#00ffff"/><rect x="2" y="7" width="1" height="1" fill="#00ee00"/><rect x="3" y="7" width="2" height="1" fill="#000000"/><rect x="5" y="7" width="1" height="1" fill="#00ffff"/><rect x="6" y="7" width="1" height="1" fill="#00ee00"/><rect x="7" y="7" width="5" height="1" fill="#ffff00"/><rect x="12" y="7" width="1" height="1" fill="#ff0000"/><rect x="13" y="7" width="1" height="1" fill="#ffff00"/><rect x="14" y="7" width="1" height="1" fill="#e8e8e8"/><rect x="15" y="7" width="1" height="1" fill="#000000"/><rect x="0" y="8" width="1" height="1" fill="#d4d4d4"/><rect x="1" y="8" width="1" height="1" fill="#00ffff"/><rect x="2" y="8" width="1" height="1" fill="#00ee00"/><rect x="3" y="8" width="1" height="1" fill="#000000"/><rect x="4" y="8" width="4" height="1" fill="#00ee00"/><rect x="8" y="8" width="6" height="1" fill="#ffff00"/><rect x="14" y="8" width="1" height="1" fill="#e8e8e8"/><rect x="15" y="8" width="1" height="1" fill="#000000"/><rect x="0" y="9" width="1" height="1" fill="#d4d4d4"/><rect x="1" y="9" width="1" height="1" fill="#000090"/><rect x="2" y="9" width="1" height="1" fill="#000000"/><rect x="3" y="9" width="2" height="1" fill="#00ffff"/><rect x="5" y="9" width="5" height="1" fill="#00ee00"/><rect x="10" y="9" width="4" height="1" fill="#ffff00"/><rect x="14" y="9" width="1" height="1" fill="#e8e8e8"/><rect x="15" y="9" width="1" height="1" fill="#000000"/><rect x="0" y="10" width="1" height="1" fill="#d4d4d4"/><rect x="1" y="10" width="2" height="1" fill="#000000"/><rect x="3" y="10" width="1" height="1" fill="#000090"/><rect x="4" y="10" width="1" height="1" fill="#000000"/><rect x="5" y="10" width="3" height="1" fill="#000090"/><rect x="8" y="10" width="6" height="1" fill="#00ffff"/><rect x="14" y="10" width="1" height="1" fill="#e8e8e8"/><rect x="15" y="10" width="1" height="1" fill="#000000"/><rect x="0" y="11" width="1" height="1" fill="#d4d4d4"/><rect x="1" y="11" width="13" height="1" fill="#000000"/><rect x="14" y="11" width="1" height="1" fill="#e8e8e8"/><rect x="15" y="11" width="1" height="1" fill="#000000"/><rect x="0" y="12" width="1" height="1" fill="#d4d4d4"/><rect x="1" y="12" width="13" height="1" fill="#000000"/><rect x="14" y="12" width="1" height="1" fill="#e8e8e8"/><rect x="15" y="12" width="1" height="1" fill="#000000"/><rect x="0" y="13" width="1" height="1" fill="#d4d4d4"/><rect x="1" y="13" width="14" height="1" fill="#e8e8e8"/><rect x="15" y="13" width="1" height="1" fill="#000000"/><rect x="0" y="14" width="16" height="1" fill="#000000"/></svg>
<svg style="left:958px;top:76px;" width="12" height="12" viewBox="0 0 12 12"><path d="M1 1l10 10M11 1l-10 10" stroke="#000" stroke-width="1.05" fill="none"/></svg>
<span id="t81" class="t" style="top:102.69px;font-size:11px;line-height:11px;color:#000;letter-spacing:-0.404px;left:452.59px;">Zone Name</span>
<div style="left:453px;top:115px;width:332px;height:28px;background:#fff;border:1px solid #7a7a7a;"></div>
<div style="left:454px;top:116px;width:330px;height:26px;background:#fff;border:1px solid;border-color:#ffffff #ffffff #ffffff #ffffff;"></div>
<div style="left:455px;top:117px;width:328px;height:24px;background:#fff;border:1px solid;border-color:#696969 #e3e3e3 #e3e3e3 #696969;"></div>
<span id="t82" class="t" style="top:120.69px;font-size:11px;line-height:11px;color:#000;letter-spacing:0.141px;left:456.61px;">inlet</span>
<div style="left:453px;top:173px;width:520px;height:375px;background:#f0f0f0;"></div>
<div style="left:453px;top:173px;width:1px;height:374px;background:#ffffff;"></div>
<div style="left:453px;top:173px;width:519px;height:1px;background:#ffffff;"></div>
<div style="left:972px;top:173px;width:1px;height:375px;background:#696969;"></div>
<div style="left:971px;top:174px;width:1px;height:373px;background:#a0a0a0;"></div>
<div style="left:453px;top:547px;width:520px;height:1px;background:#696969;"></div>
<div style="left:454px;top:546px;width:518px;height:1px;background:#a0a0a0;"></div>
<div style="left:520px;top:156px;width:49px;height:17px;background:#f0f0f0;"></div>
<div style="left:522px;top:156px;width:45px;height:1px;background:#ffffff;"></div>
<div style="left:521px;top:157px;width:1px;height:16px;background:#ffffff;"></div>
<div style="left:568px;top:158px;width:1px;height:15px;background:#696969;"></div>
<div style="left:567px;top:157px;width:1px;height:16px;background:#a0a0a0;"></div>
<span id="t83" class="t" style="top:160.69px;font-size:11px;line-height:11px;color:#000;letter-spacing:-0.227px;left:525.11px;">Thermal</span>
<div style="left:569px;top:156px;width:57px;height:17px;background:#f0f0f0;"></div>
<div style="left:571px;top:156px;width:53px;height:1px;background:#ffffff;"></div>
<div style="left:570px;top:157px;width:1px;height:16px;background:#ffffff;"></div>
<div style="left:625px;top:158px;width:1px;height:15px;background:#696969;"></div>
<div style="left:624px;top:157px;width:1px;height:16px;background:#a0a0a0;"></div>
<span id="t84" class="t" style="top:160.69px;font-size:11px;line-height:11px;color:#000;letter-spacing:-0.053px;left:574.62px;">Radiation</span>
<div style="left:626px;top:156px;width:48px;height:17px;background:#f0f0f0;"></div>
<div style="left:628px;top:156px;width:44px;height:1px;background:#ffffff;"></div>
<div style="left:627px;top:157px;width:1px;height:16px;background:#ffffff;"></div>
<div style="left:673px;top:158px;width:1px;height:15px;background:#696969;"></div>
<div style="left:672px;top:157px;width:1px;height:16px;background:#a0a0a0;"></div>
<span id="t85" class="t" style="top:160.69px;font-size:11px;line-height:11px;color:#000;letter-spacing:-0.443px;left:631.90px;">Species</span>
<div style="left:674px;top:156px;width:42px;height:17px;background:#f0f0f0;"></div>
<div style="left:676px;top:156px;width:38px;height:1px;background:#ffffff;"></div>
<div style="left:675px;top:157px;width:1px;height:16px;background:#ffffff;"></div>
<div style="left:715px;top:158px;width:1px;height:15px;background:#696969;"></div>
<div style="left:714px;top:157px;width:1px;height:16px;background:#a0a0a0;"></div>
<span id="t86" class="t" style="top:160.69px;font-size:11px;line-height:11px;color:#000;letter-spacing:-0.559px;left:683.02px;">DPM</span>
<div style="left:716px;top:156px;width:63px;height:17px;background:#f0f0f0;"></div>
<div style="left:718px;top:156px;width:59px;height:1px;background:#ffffff;"></div>
<div style="left:717px;top:157px;width:1px;height:16px;background:#ffffff;"></div>
<div style="left:778px;top:158px;width:1px;height:15px;background:#696969;"></div>
<div style="left:777px;top:157px;width:1px;height:16px;background:#a0a0a0;"></div>
<span id="t87" class="t" style="top:160.69px;font-size:11px;line-height:11px;color:#000;letter-spacing:-0.066px;left:721.12px;">Multiphase</span>
<div style="left:779px;top:156px;width:42px;height:17px;background:#f0f0f0;"></div>
<div style="left:781px;top:156px;width:38px;height:1px;background:#ffffff;"></div>
<div style="left:780px;top:157px;width:1px;height:16px;background:#ffffff;"></div>
<div style="left:820px;top:158px;width:1px;height:15px;background:#696969;"></div>
<div style="left:819px;top:157px;width:1px;height:16px;background:#a0a0a0;"></div>
<span id="t88" class="t" style="top:160.69px;font-size:11px;line-height:11px;color:#000;letter-spacing:-0.975px;left:789.59px;">UDS</span>
<div style="left:454px;top:154px;width:67px;height:20px;background:#f0f0f0;"></div>
<div style="left:456px;top:154px;width:63px;height:1px;background:#ffffff;"></div>
<div style="left:454px;top:156px;width:1px;height:18px;background:#ffffff;"></div>
<div style="left:455px;top:155px;width:1px;height:1px;background:#ffffff;"></div>
<div style="left:520px;top:156px;width:1px;height:17px;background:#696969;"></div>
<div style="left:519px;top:155px;width:1px;height:18px;background:#a0a0a0;"></div>
<span id="t89" class="t" style="top:158.69px;font-size:11px;line-height:11px;color:#000;letter-spacing:-0.211px;left:460.43px;">Momentum</span>
<span id="t90" class="t" style="top:186.69px;font-size:11px;line-height:11px;color:#000;letter-spacing:-0.163px;left:579.73px;">Reference Frame</span>
<div style="left:667px;top:185px;width:298px;height:22px;background:#e1e1e1;border:1px solid #adadad;"></div>
<span id="t91" class="t" style="top:190.69px;font-size:11px;line-height:11px;color:#000;letter-spacing:-0.054px;left:670.90px;">Absolute</span>
<svg style="left:951px;top:194.3px;" width="9" height="5" viewBox="0 0 9 5"><path d="M.5 .5l4 4 4-4" fill="none" stroke="#484848" stroke-width="1"/></svg>
<span id="t92" class="t" style="top:212.69px;font-size:11px;line-height:11px;color:#000;letter-spacing:-0.136px;left:518.10px;">Gauge Total Pressure (pascal)</span>
<div style="left:666px;top:211px;width:132px;height:28px;background:#fff;border:1px solid #7a7a7a;"></div>
<div style="left:667px;top:212px;width:130px;height:26px;background:#fff;border:1px solid;border-color:#ffffff #ffffff #ffffff #ffffff;"></div>
<div style="left:668px;top:213px;width:128px;height:24px;background:#fff;border:1px solid;border-color:#696969 #e3e3e3 #e3e3e3 #696969;"></div>
<span id="t93" class="t" style="top:216.69px;font-size:11px;line-height:11px;color:#000;letter-spacing:0.007px;left:669.90px;">9000000</span>
<div style="left:803px;top:211px;width:159px;height:22px;background:#e1e1e1;border:1px solid #adadad;"></div>
<span id="t94" class="t" style="top:216.69px;font-size:11px;line-height:11px;color:#000;letter-spacing:0.130px;left:806.46px;">constant</span>
<svg style="left:948px;top:220.3px;" width="9" height="5" viewBox="0 0 9 5"><path d="M.5 .5l4 4 4-4" fill="none" stroke="#484848" stroke-width="1"/></svg>
<span id="t95" class="t" style="top:245.69px;font-size:11px;line-height:11px;color:#000;letter-spacing:-0.152px;left:460.00px;">Supersonic/Initial Gauge Pressure (pascal)</span>
<div style="left:666px;top:244px;width:132px;height:28px;background:#fff;border:1px solid #7a7a7a;"></div>
<div style="left:667px;top:245px;width:130px;height:26px;background:#fff;border:1px solid;border-color:#ffffff #ffffff #ffffff #ffffff;"></div>
<div style="left:668px;top:246px;width:128px;height:24px;background:#fff;border:1px solid;border-color:#696969 #e3e3e3 #e3e3e3 #696969;"></div>
<span id="t96" class="t" style="top:249.69px;font-size:11px;line-height:11px;color:#000;left:670.02px;">0</span>
<div style="left:803px;top:244px;width:159px;height:22px;background:#e1e1e1;border:1px solid #adadad;"></div>
<span id="t97" class="t" style="top:249.69px;font-size:11px;line-height:11px;color:#000;letter-spacing:0.130px;left:806.46px;">constant</span>
<svg style="left:948px;top:253.3px;" width="9" height="5" viewBox="0 0 9 5"><path d="M.5 .5l4 4 4-4" fill="none" stroke="#484848" stroke-width="1"/></svg>
<span id="t98" class="t" style="top:277.69px;font-size:11px;line-height:11px;color:#000;letter-spacing:-0.128px;left:518.42px;">Direction Specification Method</span>
<div style="left:667px;top:276px;width:298px;height:22px;background:#e1e1e1;border:1px solid #adadad;"></div>
<span id="t99" class="t" style="top:281.69px;font-size:11px;line-height:11px;color:#000;letter-spacing:-0.040px;left:670.02px;">Direction Vector</span>
<svg style="left:951px;top:285.3px;" width="9" height="5" viewBox="0 0 9 5"><path d="M.5 .5l4 4 4-4" fill="none" stroke="#484848" stroke-width="1"/></svg>
<span id="t100" class="t" style="top:302.69px;font-size:11px;line-height:11px;color:#000;letter-spacing:-0.149px;left:572.10px;">Coordinate System</span>
<div style="left:667px;top:301px;width:298px;height:22px;background:#e1e1e1;border:1px solid #adadad;"></div>
<span id="t101" class="t" style="top:306.69px;font-size:11px;line-height:11px;color:#000;letter-spacing:0.028px;left:670.40px;">Cartesian (X, Y, Z)</span>
<svg style="left:951px;top:310.3px;" width="9" height="5" viewBox="0 0 9 5"><path d="M.5 .5l4 4 4-4" fill="none" stroke="#484848" stroke-width="1"/></svg>
<span id="t102" class="t" style="top:328.69px;font-size:11px;line-height:11px;color:#000;letter-spacing:-0.156px;left:514.41px;">X-Component of Flow Direction</span>
<div style="left:666px;top:327px;width:132px;height:28px;background:#fff;border:1px solid #7a7a7a;"></div>
<div style="left:667px;top:328px;width:130px;height:26px;background:#fff;border:1px solid;border-color:#ffffff #ffffff #ffffff #ffffff;"></div>
<div style="left:668px;top:329px;width:128px;height:24px;background:#fff;border:1px solid;border-color:#696969 #e3e3e3 #e3e3e3 #696969;"></div>
<span id="t103" class="t" style="top:332.69px;font-size:11px;line-height:11px;color:#000;left:669.59px;">1</span>
<div style="left:803px;top:327px;width:159px;height:22px;background:#e1e1e1;border:1px solid #adadad;"></div>
<span id="t104" class="t" style="top:332.69px;font-size:11px;line-height:11px;color:#000;letter-spacing:0.130px;left:806.46px;">constant</span>
<svg style="left:948px;top:336.3px;" width="9" height="5" viewBox="0 0 9 5"><path d="M.5 .5l4 4 4-4" fill="none" stroke="#484848" stroke-width="1"/></svg>
<span id="t105" class="t" style="top:361.69px;font-size:11px;line-height:11px;color:#000;letter-spacing:-0.120px;left:514.41px;">Y-Component of Flow Direction</span>
<div style="left:666px;top:360px;width:132px;height:28px;background:#fff;border:1px solid #7a7a7a;"></div>
<div style="left:667px;top:361px;width:130px;height:26px;background:#fff;border:1px solid;border-color:#ffffff #ffffff #ffffff #ffffff;"></div>
<div style="left:668px;top:362px;width:128px;height:24px;background:#fff;border:1px solid;border-color:#696969 #e3e3e3 #e3e3e3 #696969;"></div>
<span id="t106" class="t" style="top:365.69px;font-size:11px;line-height:11px;color:#000;left:670.02px;">0</span>
<div style="left:803px;top:360px;width:159px;height:22px;background:#e1e1e1;border:1px solid #adadad;"></div>
<span id="t107" class="t" style="top:365.69px;font-size:11px;line-height:11px;color:#000;letter-spacing:0.130px;left:806.46px;">constant</span>
<svg style="left:948px;top:369.3px;" width="9" height="5" viewBox="0 0 9 5"><path d="M.5 .5l4 4 4-4" fill="none" stroke="#484848" stroke-width="1"/></svg>
<span id="t108" class="t" style="top:394.69px;font-size:11px;line-height:11px;color:#000;letter-spacing:-0.130px;left:514.29px;">Z-Component of Flow Direction</span>
<div style="left:666px;top:393px;width:132px;height:28px;background:#fff;border:1px solid #7a7a7a;"></div>
<div style="left:667px;top:394px;width:130px;height:26px;background:#fff;border:1px solid;border-color:#ffffff #ffffff #ffffff #ffffff;"></div>
<div style="left:668px;top:395px;width:128px;height:24px;background:#fff;border:1px solid;border-color:#696969 #e3e3e3 #e3e3e3 #696969;"></div>
<span id="t109" class="t" style="top:398.69px;font-size:11px;line-height:11px;color:#000;left:670.02px;">0</span>
<div style="left:803px;top:393px;width:159px;height:22px;background:#e1e1e1;border:1px solid #adadad;"></div>
<span id="t110" class="t" style="top:398.69px;font-size:11px;line-height:11px;color:#000;letter-spacing:0.130px;left:806.46px;">constant</span>
<svg style="left:948px;top:402.3px;" width="9" height="5" viewBox="0 0 9 5"><path d="M.5 .5l4 4 4-4" fill="none" stroke="#484848" stroke-width="1"/></svg>
<span id="t111" class="t" style="top:426.69px;font-size:11px;line-height:11px;color:#000;letter-spacing:-0.223px;left:461.11px;">Turbulence</span>
<div style="left:461px;top:439px;width:503px;height:101px;border:1px solid #a0a0a0;"></div>
<div style="left:462px;top:440px;width:502px;height:100px;border:1px solid #ffffff;border-right:none;border-bottom:none;"></div>
<div style="left:461px;top:540px;width:504px;height:1px;background:#ffffff;"></div>
<div style="left:964px;top:439px;width:1px;height:102px;background:#ffffff;"></div>
<span id="t112" class="t" style="top:448.69px;font-size:11px;line-height:11px;color:#000;letter-spacing:-0.112px;left:555.90px;">Specification Method</span>
<div style="left:659px;top:447px;width:298px;height:22px;background:#e1e1e1;border:1px solid #adadad;"></div>
<span id="t113" class="t" style="top:452.69px;font-size:11px;line-height:11px;color:#000;letter-spacing:-0.058px;left:661.90px;">Intensity and Hydraulic Diameter</span>
<svg style="left:943px;top:456.3px;" width="9" height="5" viewBox="0 0 9 5"><path d="M.5 .5l4 4 4-4" fill="none" stroke="#484848" stroke-width="1"/></svg>
<span id="t114" class="t" style="top:473.69px;font-size:11px;line-height:11px;color:#000;letter-spacing:0.187px;left:692.51px;">Turbulent Intensity (%)</span>
<div style="left:810px;top:472px;width:132px;height:28px;background:#fff;border:1px solid #7a7a7a;"></div>
<div style="left:811px;top:473px;width:130px;height:26px;background:#fff;border:1px solid;border-color:#ffffff #ffffff #ffffff #ffffff;"></div>
<div style="left:812px;top:474px;width:128px;height:24px;background:#fff;border:1px solid;border-color:#696969 #e3e3e3 #e3e3e3 #696969;"></div>
<span id="t115" class="t" style="top:477.69px;font-size:11px;line-height:11px;color:#000;letter-spacing:0.150px;left:814.36px;">5.038082</span>
<span id="t116" class="t" style="top:506.69px;font-size:11px;line-height:11px;color:#000;letter-spacing:-0.191px;left:688.83px;">Hydraulic Diameter (mm)</span>
<div style="left:810px;top:505px;width:132px;height:28px;background:#fff;border:1px solid #7a7a7a;"></div>
<div style="left:811px;top:506px;width:130px;height:26px;background:#fff;border:1px solid;border-color:#ffffff #ffffff #ffffff #ffffff;"></div>
<div style="left:812px;top:507px;width:128px;height:24px;background:#fff;border:1px solid;border-color:#696969 #e3e3e3 #e3e3e3 #696969;"></div>
<span id="t117" class="t" style="top:510.69px;font-size:11px;line-height:11px;color:#000;left:814.30px;">6</span>
<div style="left:946px;top:485px;width:10px;height:14px;background:#e1e1e1;border:1px solid #adadad;"></div>
<span id="t118" class="t" style="top:487.56px;font-size:9.5px;line-height:9.5px;color:#000;font-family:'DejaVu Sans Mono', monospace;left:948.60px;">P</span>
<div style="left:946px;top:518px;width:10px;height:14px;background:#e1e1e1;border:1px solid #adadad;"></div>
<span id="t119" class="t" style="top:520.56px;font-size:9.5px;line-height:9.5px;color:#000;font-family:'DejaVu Sans Mono', monospace;left:948.60px;">P</span>
<div style="left:447px;top:555px;width:532px;height:1px;background:#a0a0a0;"></div>
<div style="left:447px;top:556px;width:532px;height:1px;background:#ffffff;"></div>
<div style="left:638px;top:565px;width:42px;height:19px;background:#e1e1e1;border:1px solid #adadad;"></div>
<span id="t120" class="t" style="top:569.69px;font-size:11px;line-height:11px;color:#000;letter-spacing:-0.806px;left:650.90px;">OK</span>
<div style="left:692px;top:565px;width:42px;height:19px;background:#e1e1e1;border:1px solid #adadad;"></div>
<div style="left:694px;top:567px;width:38px;height:15px;border:1px dotted #000;"></div>
<span id="t121" class="t" style="top:569.69px;font-size:11px;line-height:11px;color:#000;letter-spacing:-0.349px;left:696.10px;">Cancel</span>
<div style="left:746px;top:565px;width:42px;height:19px;background:#e1e1e1;border:1px solid #adadad;"></div>
<span id="t122" class="t" style="top:569.69px;font-size:11px;line-height:11px;color:#000;letter-spacing:-0.173px;left:754.52px;">Help</span>
<svg style="left:0;top:0;" width="1550" height="900" viewBox="0 0 1550 900"><defs><radialGradient id="wg" cx=".5" cy=".5" r=".5"><stop offset="0" stop-color="#ffffff"/><stop offset=".62" stop-color="#ffffff"/><stop offset="1" stop-color="#dff6e4"/></radialGradient><radialGradient id="wsh" cx=".5" cy=".5" r=".5"><stop offset=".8" stop-color="#000" stop-opacity=".10"/><stop offset="1" stop-color="#000" stop-opacity="0"/></radialGradient></defs><circle cx="1462" cy="613.4" r="40" fill="url(#wsh)"/><circle cx="1462" cy="612.8" r="33" fill="#ffffff" stroke="#e9e9e9" stroke-width="1"/><circle cx="1462" cy="612.8" r="28.6" fill="url(#wg)" stroke="#2fd06a" stroke-width="1.2"/><path d="M1462 582.0a30.8 30.8 0 0 1 27.9 17.8" fill="none" stroke="#58dc6a" stroke-width="4.2"/><path d="M1445.4 629.8v-6.4M1443 625.6l2.4-2.9 2.4 2.9" fill="none" stroke="#2a86f0" stroke-width="1.3"/></svg>
<span id="t123" class="t" style="top:594.75px;font-size:22.5px;line-height:22.5px;color:#3c3c3c;letter-spacing:0.791px;left:1444.99px;-webkit-text-stroke:.55px #fff;">18</span>
<span id="t124" class="t" style="top:603.87px;font-size:11.5px;line-height:11.5px;color:#3c3c3c;left:1469.42px;">%</span>
<span id="t125" class="t" style="top:621.11px;font-size:10.5px;line-height:10.5px;color:#3a3a3a;letter-spacing:-0.043px;left:1454.16px;">- K/s</span>
</body></html>
